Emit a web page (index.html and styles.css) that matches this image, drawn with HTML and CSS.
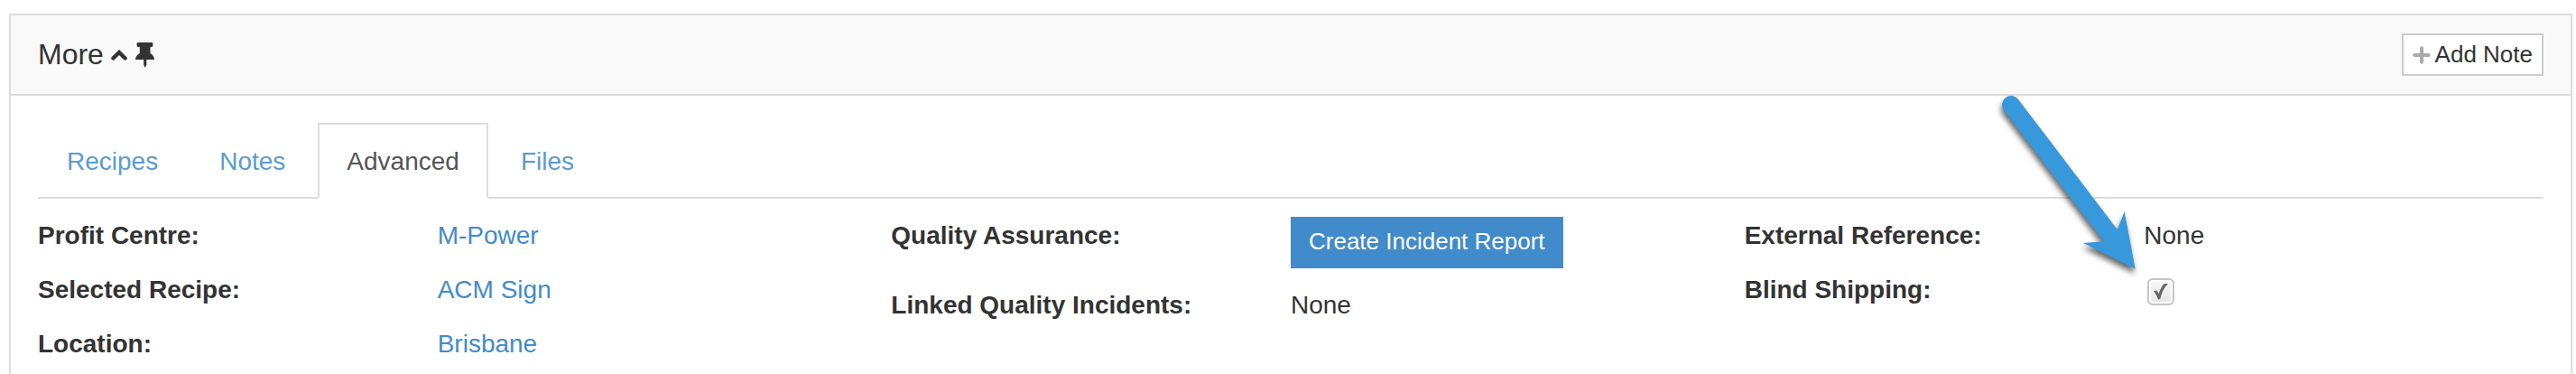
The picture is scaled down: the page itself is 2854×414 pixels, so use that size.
FILE: index.html
```html
<!DOCTYPE html>
<html lang="en">
<head>
<meta charset="utf-8">
<title>More</title>
<link rel="stylesheet" href="styles.css">
</head>
<body>
<section class="panel">
  <header class="panel-header">
    <h2 class="panel-title"><span class="title-text">More</span>
      <svg class="icon-chevron" viewBox="0 0 18 12"><path d="M2.4 9.5 L9 3 L15.6 9.5"/></svg>
      <svg class="icon-pin" viewBox="0 0 21 28"><path d="M3 0 H18 Q19.400 0 19.400 1.400 V3.600 Q19.400 5 18 5 H16.500 V12 Q20.800 14.300 21 19 H12.300 V24.800 L10.900 28 L9.200 24.800 V19 H0 Q.200 14.300 4.800 12 V5 H3 Q1.600 5 1.600 3.600 V1.400 Q1.600 0 3 0Z"/></svg>
    </h2>
    <button class="btn-note" type="button">
      <svg class="icon-plus" viewBox="0 0 20 20"><path d="M10 2.300 V17.700 M2.300 10 H17.700"/></svg><span class="btn-text">Add Note</span></button>
  </header>
  <div class="panel-body">
    <nav class="tabs">
      <a class="tab">Recipes</a>
      <a class="tab">Notes</a>
      <a class="tab active">Advanced</a>
      <a class="tab">Files</a>
    </nav>
    <div class="details">
      <div class="column">
        <div class="field"><span class="label">Profit Centre:</span><a class="link">M-Power</a></div>
        <div class="field"><span class="label">Selected Recipe:</span><a class="link">ACM Sign</a></div>
        <div class="field"><span class="label">Location:</span><a class="link">Brisbane</a></div>
      </div>
      <div class="column">
        <div class="field"><span class="label">Quality Assurance:</span><button class="btn-primary" type="button">Create Incident Report</button></div>
        <div class="field"><span class="label">Linked Quality Incidents:</span><span>None</span></div>
      </div>
      <div class="column">
        <div class="field"><span class="label">External Reference:</span><span>None</span></div>
        <div class="field"><span class="label">Blind Shipping:</span><span class="checkbox" role="checkbox" aria-checked="true"><svg class="icon-check" viewBox="0 0 18 20"><path d="M1 9.500 L4.300 8.300 L6.600 12 C8.300 7 10.500 3 12.800 1 L17 1 C12.500 5.500 10 11 8.300 18 L6 18.600 C5 15 3.500 12 1 9.500Z"/></svg></span></div>
      </div>
    </div>
  </div>
</section>
<svg class="arrow" viewBox="0 0 180 220"><path d="M36 19.900 L146 164.300 L153.700 144 L165.700 207.700 L108 179 L130.700 177.300 L20.200 32.200 A10 10 0 0 1 36 19.900Z"/></svg>
</body>
</html>
```
FILE: styles.css
```css
* { box-sizing: border-box; }

body {
  margin: 0;
  height: 414px;
  padding: 15px 4px 0 10px;
  overflow: hidden;
  background: #fff;
  color: #333;
  font: 28px/42px "Liberation Sans", Arial, sans-serif;
}

.panel {
  height: 399px;
  border: 2px solid #ddd;
  border-bottom: 0;
  background: #fff;
  box-shadow: 0 2px 4px rgba(0, 0, 0, .05);
}

.panel-header {
  display: flex;
  justify-content: space-between;
  align-items: center;
  height: 89px;
  padding: 0 30px;
  border-bottom: 2px solid #ddd;
  background: #f9f9f9;
}

.panel-title {
  display: flex;
  align-items: center;
  margin: 0;
  font-size: 32px;
  font-weight: 400;
}

.title-text {
  padding-bottom: 2px;
  line-height: 40px;
}

.icon-chevron {
  width: 18px;
  height: 12px;
  margin-left: 8px;
}

.icon-chevron path {
  fill: none;
  stroke: #333;
  stroke-width: 4.4;
  stroke-linecap: round;
}

.icon-pin {
  width: 21px;
  height: 28px;
  margin-left: 9px;
  fill: #333;
}

.btn-note {
  display: flex;
  align-items: center;
  height: 47px;
  padding: 0 10px;
  border: 2px solid #ccc;
  background: #fff;
  color: #333;
  font: 26px/36px "Liberation Sans", Arial, sans-serif;
}

.btn-text { padding-bottom: 2px; }

.icon-plus {
  width: 20px;
  height: 20px;
  margin-right: 5px;
}

.icon-plus path {
  stroke: #aaa;
  stroke-width: 4;
  stroke-linecap: round;
}

.panel-body { padding: 30px 30px 0; }

.tabs {
  display: flex;
  gap: 4px;
  height: 84px;
  border-bottom: 2px solid #ddd;
}

.tab {
  height: 84px;
  padding: 20px 30px 18px;
  border: 2px solid transparent;
  color: #5b9bd1;
}

.tab.active {
  border-color: #ddd;
  border-bottom-color: #fff;
  background: #fff;
  color: #555;
}

.details {
  display: grid;
  grid-template-columns: repeat(3, 1fr);
  gap: 60px;
  padding-top: 20px;
}

.column {
  display: flex;
  flex-direction: column;
  gap: 18px;
}

.field {
  display: grid;
  grid-template-columns: 1fr 1fr;
  justify-items: start;
}

.label { font-weight: 700; }

.link { color: #428bca; }

.btn-primary {
  height: 57px;
  margin-bottom: 2px;
  padding: 0 20px 3px;
  border: 0;
  background: #428bca;
  color: #fff;
  font: 26px/36px "Liberation Sans", Arial, sans-serif;
  white-space: nowrap;
}

.checkbox {
  display: flex;
  align-items: center;
  justify-content: center;
  width: 30px;
  height: 30px;
  margin: 8px 0 0 4px;
  border: 2px solid #c5c5c5;
  border-radius: 6px;
  background: linear-gradient(#f8f8f8, #e6e6e6);
  box-shadow: inset 0 0 0 2px #fff;
}

.icon-check {
  width: 18px;
  height: 20px;
  fill: #666;
}

/* Callout arrow lying over the panel */
.arrow {
  position: absolute;
  left: 2200px;
  top: 90px;
  width: 180px;
  height: 220px;
  overflow: visible;
  fill: #3898dc;
  filter: drop-shadow(-1px 5px 3px rgba(0, 0, 0, .6));
}
```
